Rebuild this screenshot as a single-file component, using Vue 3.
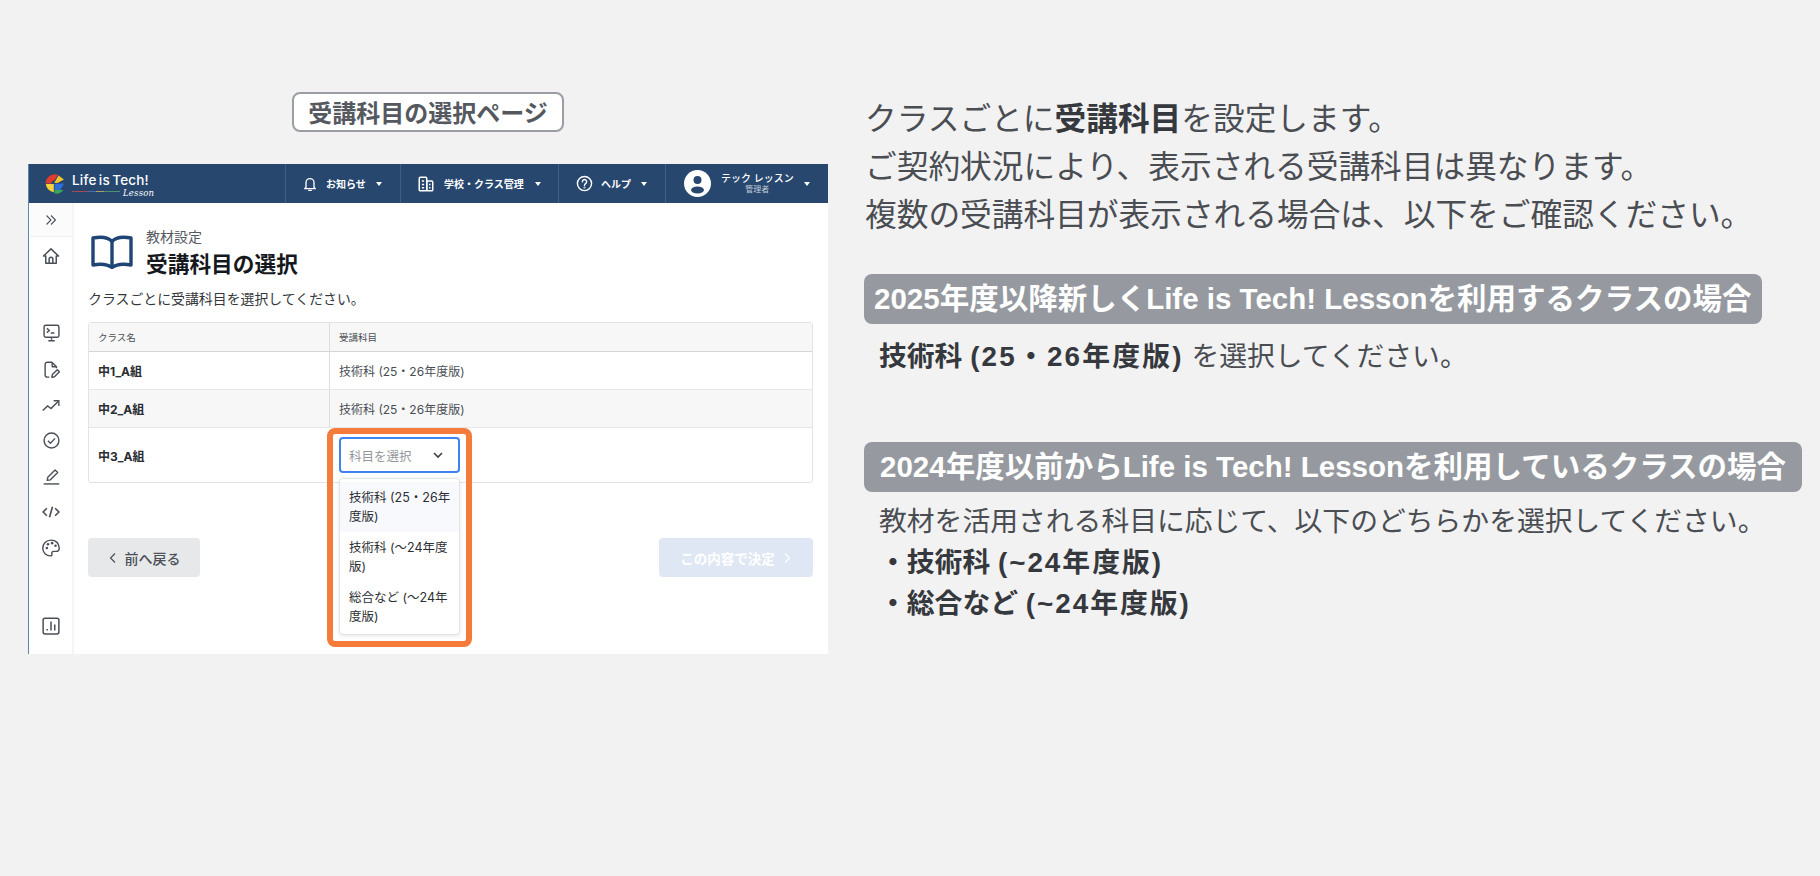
<script setup>
const rows = [
  { name: '中1_A組', subject: '技術科 (25・26年度版)' },
  { name: '中2_A組', subject: '技術科 (25・26年度版)' }
]
const options = ['技術科 (25・26年度版)', '技術科 (〜24年度版)', '総合など (〜24年度版)']
</script>

<template>
  <div class="page">
    <section class="left">
      <div class="badge-wrap"><h2 class="badge">受講科目の選択ページ</h2></div>
      <div class="panel">
        <header class="topbar">
          <div class="logo">
            <svg width="20" height="20" viewBox="0 0 20 20">
              <path d="M13 .8A9.500 9.500 0 0 0 .5 9.500h5.800a4 4 0 0 1 3.400-3.600z" fill="#e23b2e"/>
              <path d="M13.500 1.500L19 5.500l-6.500 3.500H9.500a3 3 0 0 1 1-2.200z" fill="#f4c430"/>
              <path d="M.8 10h8v8.300A9.500 9.500 0 0 1 .8 10z" fill="#f6d33c"/>
              <path d="M9.500 10l9.700-.5-4 6.500H9.500z" fill="#2f6fd8"/>
              <path d="M9.500 16h9a9.500 9.500 0 0 1-9 3.500z" fill="#3aa655"/>
            </svg>
            <div class="logo-text">
              <span class="logo-name">Life is Tech!</span>
              <div class="logo-line"><i></i><em>Lesson</em></div>
            </div>
          </div>
          <nav class="nav">
            <div class="nav-item n1">
              <svg width="16" height="16" viewBox="0 0 24 24" fill="none" stroke="#fff" stroke-width="2" stroke-linejoin="round"><path d="M6 17V10a6 6 0 0 1 12 0v7l2 2H4z"/><path d="M10 21.500h4" stroke-linecap="round"/></svg>
              <span>お知らせ</span><b class="caret"></b>
            </div>
            <div class="nav-item n2">
              <svg width="18" height="18" viewBox="0 0 24 24" fill="none" stroke="#fff" stroke-width="2" stroke-linejoin="round"><rect x="3" y="3" width="10" height="18" rx="1.500"/><rect x="13" y="8" width="8" height="13" rx="1.500"/><path d="M6.500 8h3M6.500 12.500h3M6.500 17h3M16 12.500h2M16 17h2"/></svg>
              <span>学校・クラス管理</span><b class="caret"></b>
            </div>
            <div class="nav-item n3">
              <svg width="17" height="17" viewBox="0 0 24 24" fill="none" stroke="#fff" stroke-width="2" stroke-linecap="round"><circle cx="12" cy="12" r="10"/><path d="M9 9.500a3 3 0 1 1 4.500 2.600c-1 .6-1.500 1.200-1.500 2.400"/><circle cx="12" cy="17.500" r=".4"/></svg>
              <span>ヘルプ</span><b class="caret"></b>
            </div>
            <div class="nav-item n4">
              <svg width="27" height="27" viewBox="0 0 27 27"><circle cx="13.500" cy="13.500" r="13.500" fill="#fff"/><circle cx="13.500" cy="10" r="4" fill="#27476f"/><ellipse cx="13.500" cy="20" rx="6.500" ry="3.500" fill="#27476f"/></svg>
              <div class="user"><span>テック レッスン</span><small>管理者</small></div>
              <b class="caret"></b>
            </div>
          </nav>
        </header>

        <div class="body">
          <aside class="side">
            <div class="toggle">
              <svg width="12" height="12" viewBox="0 0 12 12" fill="none" stroke="#4b5058" stroke-width="1.100"><path d="M1.500 1.500L6 6l-4.500 4.500M6 1.500L10.500 6 6 10.500"/></svg>
            </div>
            <svg class="ic i-home" width="18" height="18" viewBox="0 0 24 24" fill="none" stroke="#4b5058" stroke-width="2" stroke-linejoin="round"><path d="M2 12L12 2.500 22 12h-3v9.500H5V12z"/><path d="M9.500 21.500V16a2.500 2.500 0 0 1 5 0v5.500"/></svg>
            <svg class="ic i-term" width="17" height="18" viewBox="0 0 24 25" fill="none" stroke="#4b5058" stroke-width="2" stroke-linejoin="round"><rect x="1.500" y="1.500" width="21" height="17" rx="2.500"/><path d="M5.500 6l3.500 3-3.500 3M11 12.500h5M12 19v3M7.500 23.500h9"/></svg>
            <svg class="ic i-file" width="17" height="18" viewBox="0 0 24 25" fill="none" stroke="#4b5058" stroke-width="2" stroke-linejoin="round"><path d="M9 22.500H6a3 3 0 0 1-3-3v-15a3 3 0 0 1 3-3h6.500L19 8v2"/><path d="M13 2v6h6"/><path d="M12.500 23l.7-4 7-7 3 3-7 7z"/></svg>
            <svg class="ic i-trend" width="18" height="14" viewBox="0 0 24 18" fill="none" stroke="#4b5058" stroke-width="2"><path d="M1 15l6.500-6 4.500 3.500L21.500 3"/><path d="M15.500 2h7v7" stroke-width="1.800"/></svg>
            <svg class="ic i-check" width="17" height="17" viewBox="0 0 24 24" fill="none" stroke="#4b5058" stroke-width="2"><circle cx="12" cy="12" r="10.500"/><path d="M7 12.500l3.500 3.500 6.500-7"/></svg>
            <svg class="ic i-pen" width="17" height="17" viewBox="0 0 24 24" fill="none" stroke="#4b5058" stroke-width="2" stroke-linejoin="round"><path d="M6 17.500l.8-4.500L17 2.800l3.700 3.700L10.500 16.700z"/><path d="M1 22.500h22"/></svg>
            <svg class="ic i-code" width="18" height="12" viewBox="0 0 24 16" fill="none" stroke="#4b5058" stroke-width="2.200"><path d="M6.500 3L1.500 8l5 5M17.500 3l5 5-5 5M14 1l-4 14"/></svg>
            <svg class="ic i-palette" width="18" height="18" viewBox="0 0 24 24" fill="none" stroke="#4b5058" stroke-width="1.900"><path d="M12 1.500C5.500 1.500 1 6.500 1 12.300S5.800 22.500 11 22.500c2 0 2.700-1.300 2.200-2.800-.6-1.800.3-3.200 2.200-3.200h3.600c2.800 0 4-2 4-4.600C23 6 18.500 1.500 12 1.500z"/><g fill="#4b5058" stroke="none"><circle cx="6.500" cy="12" r="1.700"/><circle cx="8" cy="7" r="1.700"/><circle cx="13.500" cy="5.500" r="1.700"/><circle cx="18" cy="9" r="1.700"/></g></svg>
            <svg class="ic i-chart" width="18" height="18" viewBox="0 0 24 24" fill="none" stroke="#4b5058" stroke-width="2"><rect x="1.500" y="1.500" width="21" height="21" rx="2.500"/><path d="M7 18v-2M12 18V6M17 18V10"/></svg>
          </aside>

          <main class="content">
            <div class="heading">
              <svg class="book" width="42" height="34" viewBox="0 0 42 34" fill="none" stroke="#1f4576" stroke-width="3.400" stroke-linejoin="round"><path d="M21 6.500C17.500 2.500 10 1.500 2 3v27c8-1.500 15-.5 19 2.500 4-3 11-4 19-2.500V3c-8-1.500-15.500-.5-19 3.500z"/><path d="M21 6.500v26"/></svg>
              <div>
                <p class="crumb">教材設定</p>
                <h1>受講科目の選択</h1>
              </div>
            </div>
            <p class="lead">クラスごとに受講科目を選択してください。</p>

            <div class="table">
              <div class="row head"><div class="c1">クラス名</div><div class="c2">受講科目</div></div>
              <div v-for="(r, i) in rows" :key="r.name" class="row" :class="{ alt: i === 1 }">
                <div class="c1 strong">{{ r.name }}</div>
                <div class="c2">{{ r.subject }}</div>
              </div>
              <div class="row last">
                <div class="c1 strong">中3_A組</div>
                <div class="c2 sel-cell">
                  <div class="select">
                    <span>科目を選択</span>
                    <svg width="12" height="12" viewBox="0 0 12 12" fill="none" stroke="#3c4046" stroke-width="1.600"><path d="M2 4l4 4 4-4"/></svg>
                  </div>
                  <ul class="menu">
                    <li v-for="(o, i) in options" :key="o" :class="{ on: i === 0 }">{{ o }}</li>
                  </ul>
                  <div class="focus"></div>
                </div>
              </div>
            </div>

            <div class="actions">
              <button class="btn back"><svg width="10" height="12" viewBox="0 0 10 12" fill="none" stroke="#4b5058" stroke-width="1.200"><path d="M7 1.500L2.500 6 7 10.500"/></svg>前へ戻る</button>
              <button class="btn next">この内容で決定<svg width="10" height="12" viewBox="0 0 10 12" fill="none" stroke="#fff" stroke-width="1.200"><path d="M3 1.500L7.500 6 3 10.500"/></svg></button>
            </div>
          </main>
        </div>
      </div>
    </section>

    <section class="right">
      <div class="intro">
        <p>クラスごとに<strong>受講科目</strong>を設定します。</p>
        <p>ご契約状況により、表示される受講科目は異なります。</p>
        <p>複数の受講科目が表示される場合は、以下をご確認ください。</p>
      </div>
      <h3 class="bar bar1">2025年度以降新しくLife is Tech! Lessonを利用するクラスの場合</h3>
      <p class="line first"><strong>技術科 <span class="wide">(25・26年度版)</span></strong> を選択してください。</p>
      <h3 class="bar bar2">2024年度以前からLife is Tech! Lessonを利用しているクラスの場合</h3>
      <p class="line second">教材を活用される科目に応じて、以下のどちらかを選択してください。</p>
      <p class="line item"><strong>・技術科 <span class="wide2">(~24年度版)</span></strong></p>
      <p class="line item"><strong>・総合など <span class="wide2">(~24年度版)</span></strong></p>
    </section>
  </div>
</template>

<style>
html, body { margin: 0; background: #f2f2f2; }
</style>

<style scoped>
* { box-sizing: border-box; }
p, h1, h2, h3, ul { margin: 0; padding: 0; }
.page {
  width: 1820px; height: 876px; overflow: hidden; display: flex; background: #f2f2f2;
  padding: 92px 0 0 28px;
  font-family: "Inter", "Noto Sans CJK JP", sans-serif;
}
.left { width: 800px; flex: none; }
.badge-wrap { display: flex; justify-content: center; margin-bottom: 32px; }
.badge {
  height: 40px; width: 272px; border: 2px solid #9a9ea4; border-radius: 8px; background: #fff;
  color: #55595f; font-size: 24px; font-weight: 700; line-height: 35px; text-align: center;
  font-family: "Noto Sans CJK JP", sans-serif; white-space: nowrap;
}
.panel { width: 800px; height: 490px; background: #fff; display: flex; flex-direction: column; border-left: 1px solid #5f86ad; overflow: hidden; }
.topbar { height: 39px; background: #27476f; display: flex; flex: none; color: #fff; margin-left: -1px; }
.logo { width: 257px; display: flex; align-items: center; padding-left: 17px; gap: 7px; flex: none; }
.logo-text { display: flex; flex-direction: column; margin-top: 2px; }
.logo-name { font-size: 13.500px; font-weight: 500; line-height: 14px; letter-spacing: .2px; word-spacing: -1.500px; }
.logo-line { display: flex; align-items: center; height: 9px; position: relative; }
.logo-line i { width: 48px; height: 1px; background: linear-gradient(90deg, #a04a55 0 33%, #4a6fb0 33% 50%, #b0a060 50% 66%, #4f9070 66%); }
.logo-line em { font-family: "DejaVu Serif", serif; font-size: 8.500px; margin-left: 3px; line-height: 9px; margin-top: 3px; letter-spacing: .2px; }
.nav { display: flex; flex: 1; }
.nav-item { display: flex; align-items: center; border-left: 1px solid #3f5f89; font-size: 10px; font-weight: 700; white-space: nowrap; }
.n1 { width: 115px; padding-left: 16px; gap: 8px; }
.n2 { width: 158px; padding-left: 16px; gap: 9px; }
.n3 { width: 107px; padding-left: 17px; gap: 8px; }
.n4 { flex: 1; padding-left: 18px; gap: 10px; font-weight: 500; }
.caret { width: 0; height: 0; border: 3.500px solid transparent; border-top: 4.500px solid #fff; border-bottom: 0; margin-left: 2px; }
.n4 .caret { margin-left: 0; }
.user { display: flex; flex-direction: column; align-items: center; line-height: 12px; }
.user small { font-size: 8px; color: #c2ccd9; font-weight: 400; line-height: 11px; }
.body { flex: 1; display: flex; min-height: 0; }
.side { width: 45px; flex: none; display: flex; flex-direction: column; align-items: center; border-right: 2px solid #f4f5f6; padding-left: 1px; }
.toggle { width: 100%; height: 34px; flex: none; display: flex; align-items: center; justify-content: center; background: #fbfbfb; border-bottom: 1px solid #f0f0f0; padding-right: 1px; }
.ic { flex: none; }
.i-home { margin-top: 10px; }
.i-term { margin-top: 59px; }
.i-file { margin-top: 19px; }
.i-trend { margin-top: 20px; }
.i-check { margin-top: 19px; }
.i-pen { margin-top: 19px; }
.i-code { margin-top: 21px; }
.i-palette { margin-top: 21px; }
.i-chart { margin-top: 60px; }
.content { flex: 1; padding: 24px 15px 0 14px; min-width: 0; }
.heading { display: flex; gap: 13px; height: 44px; }
.book { margin: 8px 0 0 3px; flex: none; }
.crumb { font-size: 14px; line-height: 20px; color: #555a61; }
h1 { font-size: 21.700px; font-weight: 700; line-height: 32px; color: #15181c; white-space: nowrap; font-family: "Noto Sans CJK JP", sans-serif; }
.lead { margin-top: 18px; font-size: 13.900px; line-height: 20px; color: #33373c; white-space: nowrap; }
.table { margin-top: 13px; width: 725px; border: 1px solid #e2e3e5; border-radius: 3px; color: #4a4e54; font-size: 12px; }
.row { display: flex; height: 38px; border-bottom: 1px solid #e6e7e9; }
.row.head { height: 29px; background: #f7f7f7; border-bottom: 1px solid #d5d6d8; font-size: 9.500px; color: #4a4e54; }
.row.alt { background: #f7f7f7; }
.row.last { height: 54px; border-bottom: 0; }
.c1 { width: 241px; flex: none; padding-left: 9px; display: flex; align-items: center; border-right: 1px solid #dcdddf; }
.c2 { flex: 1; padding-left: 9px; display: flex; align-items: center; }
.last .c1 { border-right: 0; width: 242px; }
.strong { font-weight: 700; color: #2a2d32; font-size: 12px; }
.sel-cell { position: relative; }
.select { position: absolute; left: 8px; top: 9px; width: 121px; height: 36px; border: 2px solid #3f83f0; border-radius: 4px; background: #fff; display: flex; align-items: center; justify-content: space-between; padding: 0 14px 0 8px; color: #94979c; font-size: 12.500px; }
.menu { position: absolute; z-index: 2; left: 8px; top: 50px; width: 121px; height: 157px; background: #fff; border: 1px solid #e3e4e6; border-radius: 4px; box-shadow: 0 1px 4px rgba(0,0,0,.1); list-style: none; padding: 3px 0; color: #2c2f34; font-size: 12.500px; line-height: 19px; }
.menu li { padding: 6px 8px 6px 9px; height: 50px; }
.menu li.on { background: #f7f9fd; }
.focus { position: absolute; z-index: 3; left: -4px; top: 0; width: 145px; height: 219px; border: 6px solid #f47b3a; border-radius: 8px; pointer-events: none; }
.actions { display: flex; justify-content: space-between; width: 725px; margin-top: 55px; }
.btn { height: 39px; border: 0; border-radius: 4px; display: flex; align-items: center; justify-content: center; gap: 7px; font-family: inherit; font-size: 14px; font-weight: 500; padding: 0; }
.back { width: 112px; background: #e7e8ea; color: #4b5058; }
.next { width: 154px; background: #e0e7f4; color: #fff; font-weight: 700; font-size: 13.500px; }
.right { margin-left: 36px; flex: 1; font-family: "Liberation Sans", "Noto Sans CJK JP", sans-serif; color: #4a4d52; }
.intro { padding-top: 3px; padding-left: 1px; font-size: 31.700px; line-height: 48px; white-space: nowrap; }
.intro p { height: 48px; }
strong { font-weight: 700; color: #35383c; }
.bar { height: 50px; background: #969aa0; border-radius: 8px; color: #fff; font-size: 29.500px; font-weight: 700; line-height: 50px; white-space: nowrap; display: block; }
.bar1 { width: 898px; padding-left: 10px; margin-top: 35px; }
.bar2 { width: 938px; padding-left: 16px; margin-top: 65px; }
.line { padding-left: 15px; font-size: 27.800px; line-height: 41px; white-space: nowrap; }
.first { margin-top: 12px; }
.second { margin-top: 9px; }
.wide { letter-spacing: 2.200px; }
.wide2 { letter-spacing: 2px; }
</style>
